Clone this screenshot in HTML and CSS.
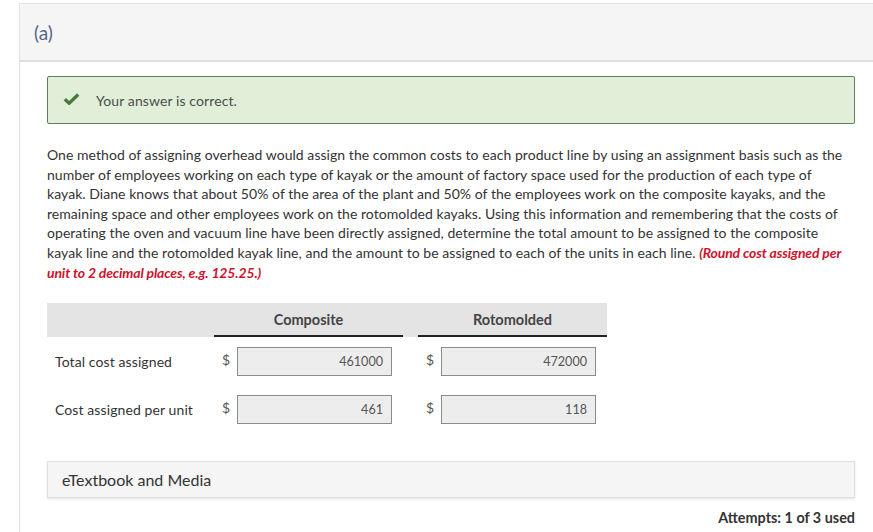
FILE: index.html
```html
<!DOCTYPE html>
<html>
<head>
<meta charset="utf-8">
<link rel="stylesheet" href="styles.css">
</head>
<body>
<div class="card">
  <div class="card-head">(a)</div>
  <div class="card-body">
    <div class="correct">
      <svg class="check" width="17" height="12" viewBox="0 0 17 12"><path d="M1.8 6.2 L6.2 10.2 L15.2 1.6" fill="none" stroke="#4a7a3a" stroke-width="3.4" stroke-linejoin="miter"/></svg>
      <span>Your answer is correct.</span>
    </div>
    <p class="question">One method of assigning overhead would assign the common costs to each product line by using an assignment basis such as the number of employees working on each type of kayak or the amount of factory space used for the production of each type of kayak. Diane knows that about 50% of the area of the plant and 50% of the employees work on the composite kayaks, and the remaining space and other employees work on the rotomolded kayaks. Using this information and remembering that the costs of operating the oven and vacuum line have been directly assigned, determine the total amount to be assigned to the composite kayak line and the rotomolded kayak line, and the amount to be assigned to each of the units in each line. <em class="hint">(Round cost assigned per unit to 2 decimal places, e.g. 125.25.)</em></p>

    <div class="grid">
      <div class="row head">
        <div class="lbl"></div>
        <div class="col colhead">Composite</div>
        <div class="gap"></div>
        <div class="col colhead">Rotomolded</div>
      </div>
      <div class="row">
        <div class="lbl">Total cost assigned</div>
        <div class="col cell"><span class="cur">$</span><span class="inp">461000</span></div>
        <div class="gap"></div>
        <div class="col cell"><span class="cur">$</span><span class="inp">472000</span></div>
      </div>
      <div class="row">
        <div class="lbl">Cost assigned per unit</div>
        <div class="col cell"><span class="cur">$</span><span class="inp">461</span></div>
        <div class="gap"></div>
        <div class="col cell"><span class="cur">$</span><span class="inp">118</span></div>
      </div>
    </div>

    <div class="media">eTextbook and Media</div>
    <div class="attempts">Attempts: 1 of 3 used</div>
  </div>
</div>
</body>
</html>
```
FILE: styles.css
```css
html, body {
  margin: 0;
  padding: 0;
  background: #fff;
  overflow: hidden;
  font-family: Lato, "Open Sans", Arial, sans-serif;
  color: #333;
}
.card {
  margin: 3px 0 0 19px;
  width: 870px;
  border-top: 1px solid #e2e2e2;
  border-left: 1px solid #e2e2e2;
  min-height: 540px;
}
.card-head {
  background: #f5f5f5;
  border-bottom: 2px solid #e0e0e0;
  padding-left: 14px;
  box-sizing: border-box;
  height: 58px;
  line-height: 58px;
  font-size: 19px;
  color: #56668a;
}
.card-body {
  padding: 14px 0 0 27px;
}
.correct {
  width: 808px;
  height: 48px;
  box-sizing: border-box;
  background: #e1efd9;
  border: 1px solid #5f7d5b;
  border-radius: 2px;
  display: flex;
  align-items: center;
  padding-left: 15px;
  font-size: 14px;
  letter-spacing: 0.1px;
  color: #4d4d4d;
}
.check {
  margin-right: 16px;
  margin-top: -2px;
}
.question {
  width: 800px;
  margin: 21px 0 0 0;
  font-size: 14px;
  letter-spacing: 0.05px;
  line-height: 19.6px;
  color: #333;
}
.hint {
  color: #d0112b;
  font-weight: bold;
  font-style: italic;
  letter-spacing: -0.15px;
}
.grid {
  margin-top: 21px;
  width: 560px;
}
.row {
  display: flex;
  height: 48px;
  align-items: center;
}
.row.head {
  height: 34px;
  background: #e4e4e4;
  align-items: stretch;
}
.lbl {
  width: 167px;
  padding-left: 8px;
  box-sizing: border-box;
  font-size: 14px;
  letter-spacing: 0.1px;
  color: #333;
}
.col {
  width: 189px;
}
.gap {
  width: 15px;
}
.colhead {
  border-bottom: 2px solid #222;
  box-sizing: border-box;
  display: flex;
  align-items: center;
  justify-content: center;
  font-size: 14.5px;
  font-weight: bold;
  color: #444;
  padding-top: 1px;
}
.cell {
  display: flex;
  align-items: center;
}
.cur {
  width: 23px;
  padding-left: 8px;
  box-sizing: border-box;
  font-size: 14px;
  color: #555;
  margin-top: -3px;
}
.inp {
  width: 155px;
  height: 29px;
  box-sizing: border-box;
  border: 1px solid #8a8a8a;
  background: #ededed;
  text-align: right;
  padding-right: 8px;
  line-height: 27px;
  font-size: 12.6px;
  color: #555;
}
.media {
  margin-top: 28px;
  width: 808px;
  height: 37px;
  box-sizing: border-box;
  background: #f5f5f5;
  border: 1px solid #e0e0e0;
  box-shadow: 0 1px 2px rgba(0,0,0,0.12);
  padding-left: 14px;
  line-height: 35px;
  font-size: 16px;
  color: #333;
}
.attempts {
  width: 808px;
  text-align: right;
  margin-top: 11px;
  font-size: 14.4px;
  font-weight: bold;
  color: #333;
}
```
